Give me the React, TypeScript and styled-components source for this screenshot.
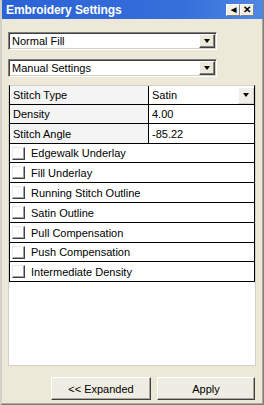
import React from 'react'
import styled, { createGlobalStyle } from 'styled-components'

const GlobalStyle = createGlobalStyle`
  html, body {
    margin: 0;
    padding: 0;
    background: #ece9d8;
  }
  body {
    font-family: 'Liberation Sans', Arial, sans-serif;
    font-size: 11px;
    color: #000;
  }
`

const Window = styled.div`
  width: 264px;
  height: 405px;
  box-sizing: border-box;
  display: flex;
  flex-direction: column;
  background: #ece9d8;
  border-left: 2px solid #d4d0c8;
  border-right: 1px solid #7f7d75;
  border-bottom: 1px solid #7f7d75;
  box-shadow: inset -1px -1px 0 #aca899;
`

const TitleBar = styled.div`
  height: 19px;
  flex: none;
  display: flex;
  align-items: center;
  justify-content: space-between;
  padding: 0 9px 0 4px;
  background: linear-gradient(to right, #2b62d6, #3670da 70%, #4f88e4);
`

const Title = styled.span`
  color: #fff;
  font-weight: bold;
  font-size: 12px;
  letter-spacing: -0.1px;
`

const TitleButtons = styled.div`
  display: flex;
`

const TitleButton = styled.div<{ $size: number }>`
  width: 14px;
  height: 12px;
  box-sizing: border-box;
  display: flex;
  align-items: center;
  justify-content: center;
  background: #f0efe8;
  border: 1px solid;
  border-color: #fff #808080 #808080 #fff;
  font-size: ${p => p.$size}px;
  font-weight: bold;
  line-height: 1;
`

const Body = styled.div`
  flex: 1;
  display: flex;
  flex-direction: column;
  padding: 11px 8px 0 6px;
`

const Select = styled.div<{ $gap: number }>`
  width: 209px;
  height: 18px;
  box-sizing: border-box;
  margin-top: ${p => p.$gap}px;
  display: flex;
  align-items: center;
  background: #fff;
  border: 1px solid;
  border-color: #808080 #fff #fff #808080;
  box-shadow: inset 1px 1px 0 #404040, inset -1px -1px 0 #d4d0c8;
  padding-left: 3px;
`

const SelectText = styled.span`
  flex: 1;
  font-size: 11px;
`

const ArrowButton = styled.div`
  width: 16px;
  height: 14px;
  margin-right: 1px;
  box-sizing: border-box;
  display: flex;
  align-items: center;
  justify-content: center;
  background: #ece9d8;
  border: 1px solid;
  border-color: #fff #404040 #404040 #fff;
  box-shadow: inset -1px -1px 0 #808080;
`

const Arrow = styled.span`
  width: 0;
  height: 0;
  border-left: 3.5px solid transparent;
  border-right: 3.5px solid transparent;
  border-top: 4px solid #000;
`

const Panel = styled.div`
  margin-top: 8px;
  width: 248px;
  height: 281px;
  box-sizing: border-box;
  background: #fff;
  border: 1px solid #d4d0c8;
  border-top: none;
`

const Grid = styled.div`
  border: 1px solid #000;
  border-bottom: none;
  border-top: 1px solid #d4d0c8;
`

const Row = styled.div<{ $h: number }>`
  height: ${p => p.$h}px;
  display: flex;
  align-items: stretch;
  border-bottom: 1px solid #000;
`

const Label = styled.div`
  width: 139px;
  display: flex;
  align-items: center;
  padding-left: 3px;
  box-sizing: border-box;
  background: #f4f4f4;
  border-right: 1px solid #000;
`

const Value = styled.div`
  flex: 1;
  display: flex;
  align-items: center;
  justify-content: space-between;
  padding-left: 3px;
`

const CellButton = styled(ArrowButton)`
  height: 17px;
  margin-right: 0;
  border-color: #fff #d4d0c8 #d4d0c8 #fff;
  box-shadow: none;
  background: #efeee8;
`

const CheckRow = styled(Row)`
  align-items: center;
  padding-left: 2px;
  gap: 6px;
`

const Check = styled.span`
  width: 13px;
  height: 13px;
  box-sizing: border-box;
  background: #fff;
  border: 1px solid;
  border-color: #e8e8e8 #404040 #404040 #e8e8e8;
  box-shadow: inset -1px -1px 0 #a0a0a0, inset 1px 1px 0 #fff;
`

const Footer = styled.div`
  display: flex;
  justify-content: flex-end;
  gap: 6px;
  margin-top: 11px;
`

const Button = styled.div<{ $w: number }>`
  width: ${p => p.$w}px;
  height: 23px;
  box-sizing: border-box;
  display: flex;
  align-items: center;
  justify-content: center;
  background: #efede3;
  border: 1px solid;
  border-color: #fff #404040 #404040 #fff;
  box-shadow: inset -1px -1px 0 #aca899;
  font-size: 11px;
`

// row heights follow the ~19.7px pitch of the original list
const props = [
  { label: 'Stitch Type', value: 'Satin', drop: true, h: 18 },
  { label: 'Density', value: '4.00', h: 18 },
  { label: 'Stitch Angle', value: '-85.22', h: 19 },
]

const options = [
  { label: 'Edgewalk Underlay', h: 18 },
  { label: 'Fill Underlay', h: 19 },
  { label: 'Running Stitch Outline', h: 19 },
  { label: 'Satin Outline', h: 19 },
  { label: 'Pull Compensation', h: 19 },
  { label: 'Push Compensation', h: 18 },
  { label: 'Intermediate Density', h: 19 },
]

export default function App() {
  return (
    <>
      <GlobalStyle />
      <Window>
        <TitleBar>
          <Title>Embroidery Settings</Title>
          <TitleButtons>
            <TitleButton $size={7}>◀</TitleButton>
            <TitleButton $size={10}>✕</TitleButton>
          </TitleButtons>
        </TitleBar>
        <Body>
          <Select $gap={2}>
            <SelectText>Normal Fill</SelectText>
            <ArrowButton>
              <Arrow />
            </ArrowButton>
          </Select>
          <Select $gap={9}>
            <SelectText>Manual Settings</SelectText>
            <ArrowButton>
              <Arrow />
            </ArrowButton>
          </Select>
          <Panel>
            <Grid>
              {props.map(p => (
                <Row key={p.label} $h={p.h}>
                  <Label>{p.label}</Label>
                  <Value>
                    {p.value}
                    {p.drop && (
                      <CellButton>
                        <Arrow />
                      </CellButton>
                    )}
                  </Value>
                </Row>
              ))}
              {options.map(o => (
                <CheckRow key={o.label} $h={o.h}>
                  <Check />
                  {o.label}
                </CheckRow>
              ))}
            </Grid>
          </Panel>
          <Footer>
            <Button $w={100}>&lt;&lt; Expanded</Button>
            <Button $w={98}>Apply</Button>
          </Footer>
        </Body>
      </Window>
    </>
  )
}
